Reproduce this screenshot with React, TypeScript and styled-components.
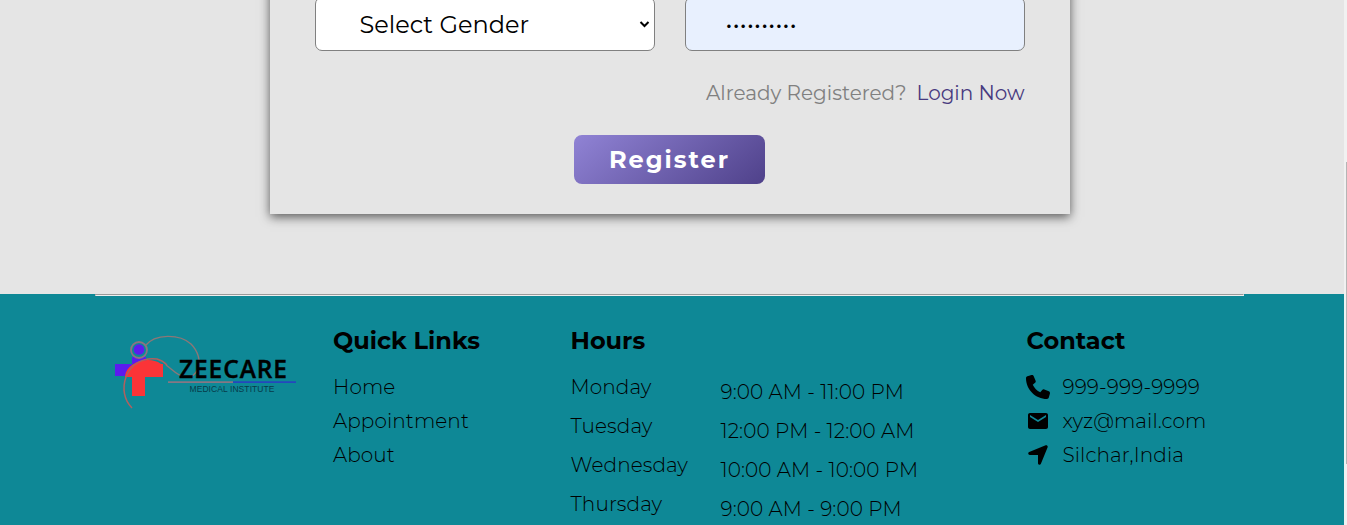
import React from "react";
import styled, { createGlobalStyle } from "styled-components";
import { FaPhone, FaLocationArrow } from "react-icons/fa6";
import { MdEmail } from "react-icons/md";

const GlobalStyle = createGlobalStyle`
  * { box-sizing: border-box; margin: 0; padding: 0; }
  body { background: #e5e5e5; overflow: hidden; }
`;

const Page = styled.div`
  display: flex;
  height: 525px;
  overflow: hidden;
  font-family: Montserrat, Inter, sans-serif;
  color: #000;
`;

const Content = styled.div`
  flex: 1;
  height: 525px;
  overflow: hidden;
`;

const Track = styled.div`
  width: 3px;
  background: #f1f1f1;
  padding: 162px 0 0 2px;
`;

const Thumb = styled.div`
  height: 302px;
  background: #b5b5b5;
`;

const Section = styled.main`
  display: flow-root;
  height: 294px;
`;

const Card = styled.form`
  width: 800px;
  height: 262px;
  margin: -48px 0 0 270px;
  padding: 45px 45px 0;
  background: #e5e5e5;
  box-shadow: 0 3px 10px rgba(0, 0, 0, 0.62);
`;

const Fields = styled.div`
  display: flex;
  gap: 30px;
`;

const Field = styled.div<{ $filled?: boolean }>`
  display: flex;
  width: 340px;
  align-items: center;
  justify-content: space-between;
  height: 54px;
  padding: 0 4px 0 ${(p) => (p.$filled ? 39.5 : 43.5)}px;
  border: 1px solid #808080;
  border-radius: 7px;
  background: ${(p) => (p.$filled ? "#e8f0fe" : "#fff")};
`;

const Text = styled.span<{ $size?: number; $track?: number; $color?: string; $weight?: number }>`
  font-size: ${(p) => p.$size ?? 20}px;
  font-weight: ${(p) => p.$weight ?? 400};
  letter-spacing: ${(p) => p.$track ?? 0}px;
  color: ${(p) => p.$color ?? "inherit"};
  white-space: nowrap;
`;

const LoginLine = styled.div`
  display: flex;
  justify-content: flex-end;
  height: 30px;
  margin-top: 27px;
  line-height: 30px;
`;

const LoginLink = styled.a`
  width: 108.5px;
  margin-left: 10px;
`;

const RegisterButton = styled.button`
  display: block;
  width: 191px;
  height: 49px;
  margin: 27px auto 0 259px;
  border: 0;
  border-radius: 8px;
  background: linear-gradient(140deg, #9083d5, #4f418a);
  color: #fff;
  font-family: inherit;
`;

const Footer = styled.footer`
  height: 231px;
  padding: 0 100px 0 95px;
  background: #0e8896;
`;

const Rule = styled.hr`
  height: 2px;
  border: 1px solid;
  border-color: #9a9a9a #eee #eee #9a9a9a;
`;

const Columns = styled.div`
  display: grid;
  grid-template-columns: 238px 237.5px 456px auto;
`;

const LogoLink = styled.a`
  padding: 34px 0 0 15px;
`;

const Column = styled.section`
  padding-top: 30px;
`;

const Heading = styled.h4`
  height: 30px;
  margin-bottom: 16px;
  line-height: 30px;
  font-size: 24px;
`;

const List = styled.ul<{ $pitch: number }>`
  list-style: none;
  li {
    display: flex;
    align-items: center;
    height: 30px;
    margin-bottom: ${(p) => p.$pitch - 30}px;
  }
`;

const ListText = styled(Text)`
  font-weight: 300;
  letter-spacing: 0.11px;
`;

const Day = styled.span`
  width: 150px;
`;

const Time = styled.span`
  padding-top: 10px;
`;

const IconSlot = styled.span`
  display: flex;
  justify-content: center;
  width: 24px;
  margin: 0 13px 0 -1px;
`;

const links = ["Home", "Appointment", "About"];

const hours = [
  ["Monday", "9:00 AM - 11:00 PM"],
  ["Tuesday", "12:00 PM - 12:00 AM"],
  ["Wednesday", "10:00 AM - 10:00 PM"],
  ["Thursday", "9:00 AM - 9:00 PM"],
];

const contacts: [React.ReactNode, string][] = [
  [<FaPhone size={24} />, "999-999-9999"],
  [<MdEmail size={24} />, "xyz@mail.com"],
  [<FaLocationArrow size={24} />, "Silchar,India"],
];

function Logo() {
  return (
    <svg width="190" height="84" viewBox="110 330 190 84" fill="none">
      <path d="M132 357h14v7h-14zM115 364h17v12h-17z" fill="#5b1bef" />
      <path d="M125 376c1-9 11-16 23-16 5 0 9 1 13 4h2v13h-18v19h-13v-19h-7z" fill="#fb3437" />
      <circle cx="139" cy="350" r="8" stroke="#8b7482" strokeWidth="1.8" />
      <circle cx="139" cy="349.500" r="5.300" fill="#5b1bef" />
      <path d="M145 346c10-13 35-12 46-2 7 7 10 17 7 25-3 6-8 9-13 8-8-1-13-8-19-12" stroke="#8b7777" strokeWidth="1.400" />
      <path d="M132 408c-8-8-10-20-6-31 5-13 17-20 31-18 4 1 7 3 10 6" stroke="#b0605f" strokeWidth="1.500" />
      <path d="M168 382.200h65" stroke="#867783" strokeWidth="1.700" />
      <path d="M233 382.200h63" stroke="#2547bd" strokeWidth="1.700" />
      <text x="179" y="378" textLength="108" fill="#000" fontFamily="Open Sans, sans-serif" fontSize="24.500" fontWeight="600" stroke="#000" strokeWidth="0.400">ZEECARE</text>
      <text x="189.500" y="392" textLength="85" fill="#073b49" fontFamily="Liberation Sans, sans-serif" fontSize="8.500">MEDICAL INSTITUTE</text>
    </svg>
  );
}

export default function App() {
  return (
    <>
      <GlobalStyle />
      <Page>
        <Content>
          <Section>
            <Card>
              <Fields>
                <Field>
                  <Text $size={24}>Select Gender</Text>
                  <svg width="11" height="8" viewBox="0 0 11 8" fill="none" stroke="#000" strokeWidth="2">
                    <path d="M1.500 2l4 4 4-4" />
                  </svg>
                </Field>
                <Field $filled>
                  <Text $size={23} $track={0.35}>••••••••••</Text>
                </Field>
              </Fields>
              <LoginLine>
                <Text $color="#808080">Already Registered?</Text>
                <LoginLink><Text $color="#483a80">Login Now</Text></LoginLink>
              </LoginLine>
              <RegisterButton type="button">
                <Text $size={24} $weight={700} $track={2}>Register</Text>
              </RegisterButton>
            </Card>
          </Section>
          <Footer>
            <Rule />
            <Columns>
              <LogoLink><Logo /></LogoLink>
              <Column>
                <Heading><Text $size={24} $weight={700}>Quick Links</Text></Heading>
                <List $pitch={34}>
                  {links.map((label) => (
                    <li key={label}><ListText>{label}</ListText></li>
                  ))}
                </List>
              </Column>
              <Column>
                <Heading><Text $size={24} $weight={700}>Hours</Text></Heading>
                <List $pitch={39}>
                  {hours.map(([day, time]) => (
                    <li key={day}>
                      <Day><ListText>{day}</ListText></Day>
                      <Time><ListText>{time}</ListText></Time>
                    </li>
                  ))}
                </List>
              </Column>
              <Column>
                <Heading><Text $size={24} $weight={700}>Contact</Text></Heading>
                <List $pitch={34}>
                  {contacts.map(([icon, label]) => (
                    <li key={label}>
                      <IconSlot>{icon}</IconSlot>
                      <ListText>{label}</ListText>
                    </li>
                  ))}
                </List>
              </Column>
            </Columns>
          </Footer>
        </Content>
        <Track><Thumb /></Track>
      </Page>
    </>
  );
}
